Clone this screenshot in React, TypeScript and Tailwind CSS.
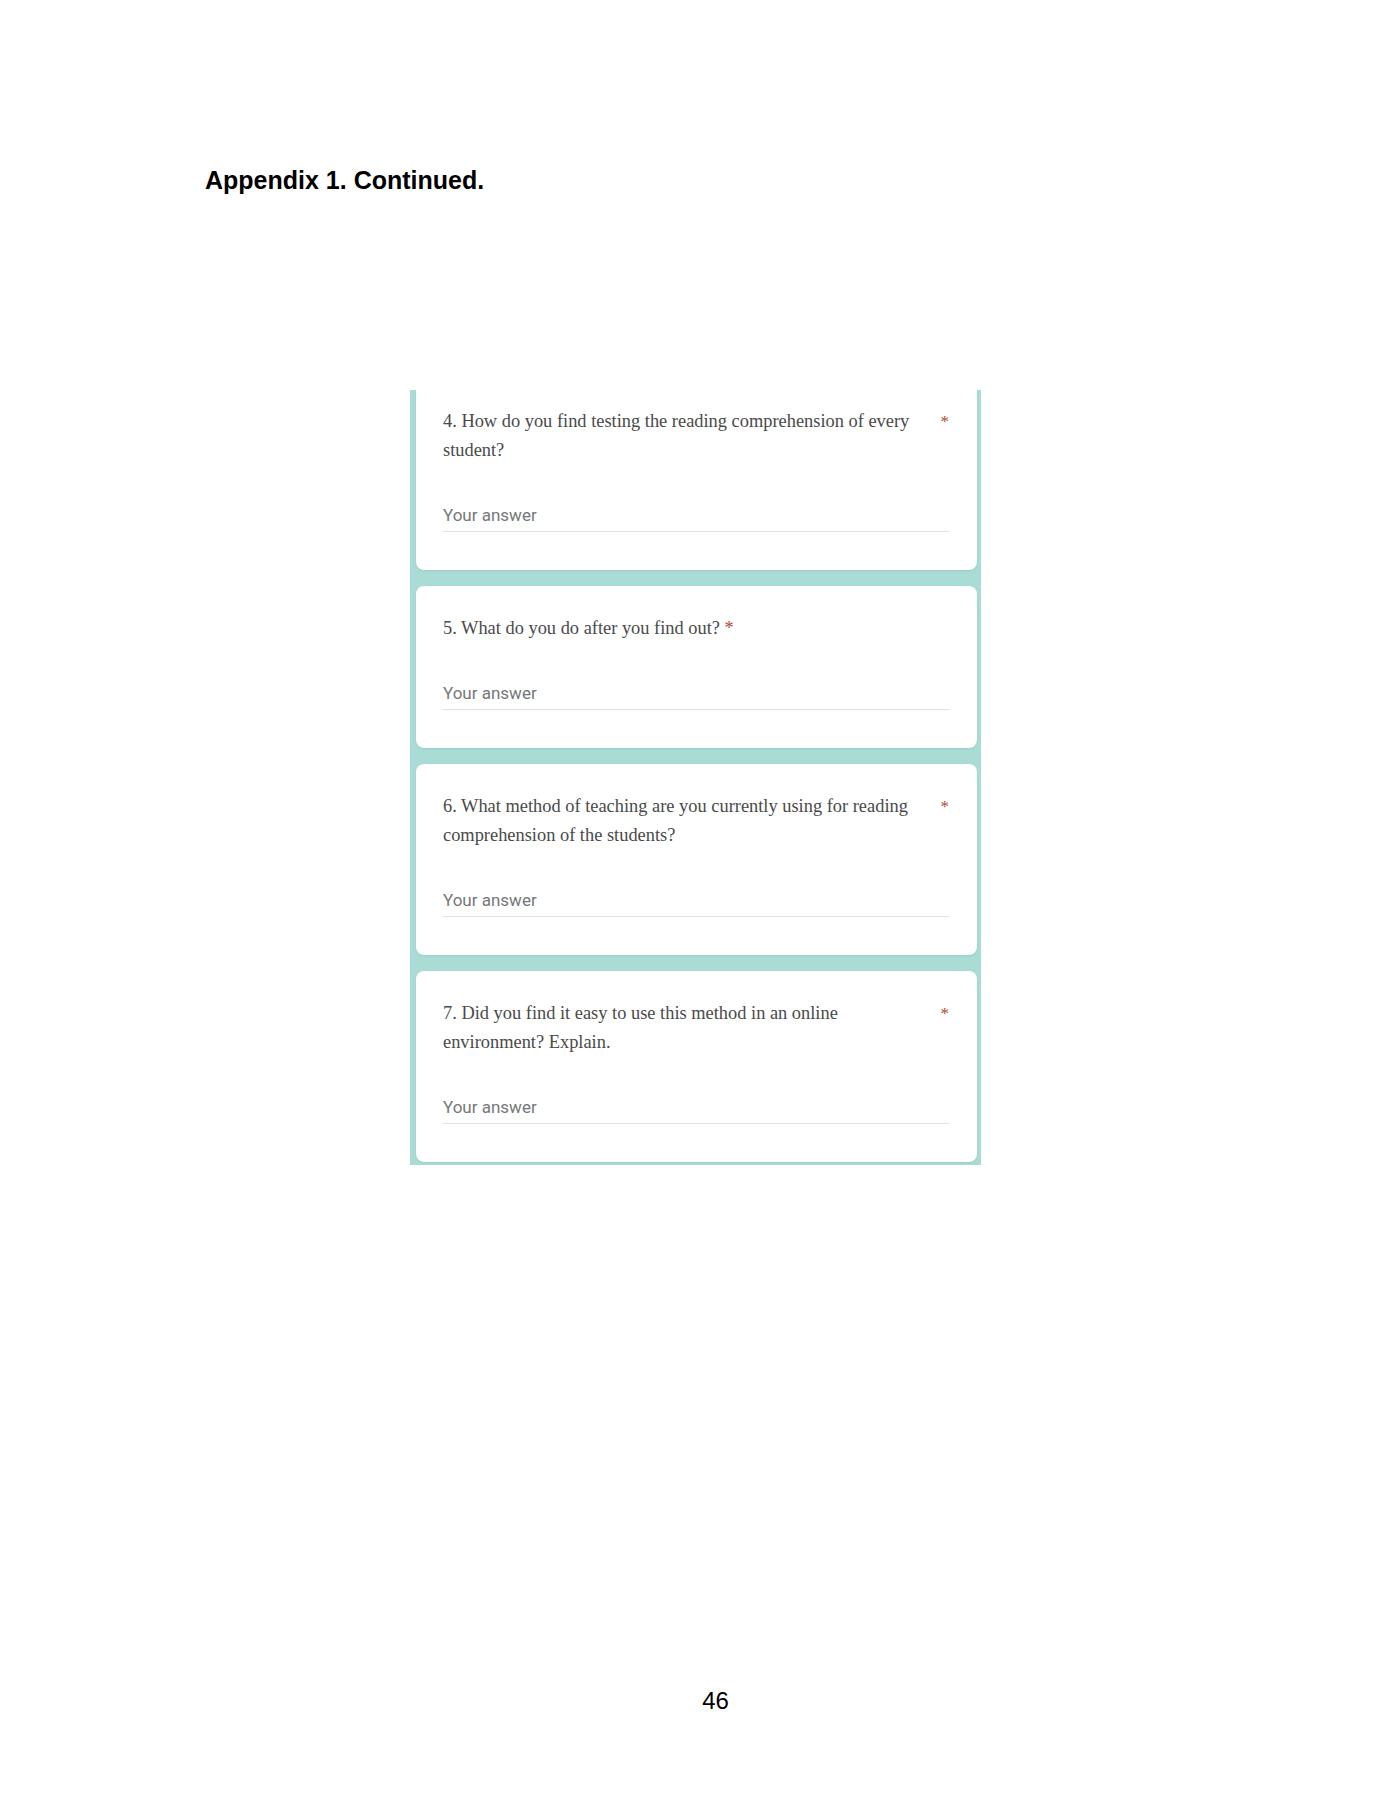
const questions = [
  { id: 4, lines: ["4. How do you find testing the reading comprehension of every", "student?"], inlineStar: false },
  { id: 5, lines: ["5. What do you do after you find out?"], inlineStar: true },
  { id: 6, lines: ["6. What method of teaching are you currently using for reading", "comprehension of the students?"], inlineStar: false },
  { id: 7, lines: ["7. Did you find it easy to use this method in an online", "environment? Explain."], inlineStar: false },
];

function QuestionCard({ q, first }: { q: (typeof questions)[number]; first: boolean }) {
  return (
    <div
      className={`bg-white pl-[27px] pr-[28px] pb-[38px] shadow-[0_1px_2px_rgba(0,0,0,0.08)] ${first ? "rounded-b-[8px] pt-[17px]" : "rounded-[8px] pt-[28px]"}`}
    >
      <div className="flex items-start justify-between">
        <div className="font-['Liberation_Serif',serif] text-[18.4px] leading-[29px] text-[#4a4a4a]">
          {q.lines.map((line, i) => (
            <div key={i}>
              {line}
              {q.inlineStar && i === q.lines.length - 1 && <span className="text-[#b5463c]"> *</span>}
            </div>
          ))}
        </div>
        {!q.inlineStar && (
          <span className="font-['Liberation_Serif',serif] text-[17px] leading-[29px] text-[#b5463c]">*</span>
        )}
      </div>
      <div className="mt-[38px] border-b border-[#e2e2e2] pb-[4px] font-['Roboto',sans-serif] text-[17px] leading-[24px] text-[#74777b]">
        Your answer
      </div>
    </div>
  );
}

export default function App() {
  return (
    <div className="min-h-[1800px] w-[1390px] bg-white">
      <div className="pl-[205px] pt-[166px]">
        <h1 className="font-['Liberation_Sans',Arial,sans-serif] text-[25px] font-bold leading-[28px] text-black">
          Appendix 1. Continued.
        </h1>
      </div>

      <div className="ml-[410px] mt-[196px] w-[571px] bg-[#a8dcd5] pl-[6px] pr-[4px] pb-[3px]">
        <div className="flex flex-col gap-[16px]">
          {questions.map((q, i) => (
            <QuestionCard key={q.id} q={q} first={i === 0} />
          ))}
        </div>
      </div>

      <div className="mt-[522px] pb-[86px] text-center font-['Liberation_Sans',Arial,sans-serif] text-[24px] leading-[28px] text-black">
        <span className="ml-[41px]">46</span>
      </div>
    </div>
  );
}
